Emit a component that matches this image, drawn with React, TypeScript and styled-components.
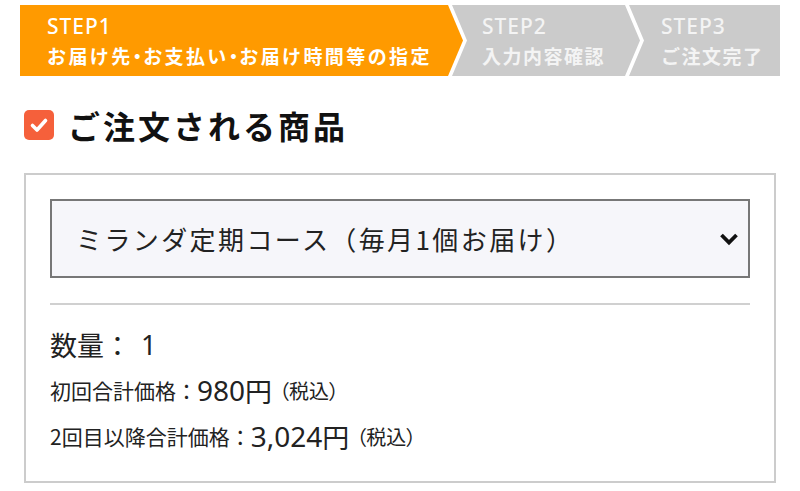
import React from "react";
import styled, { createGlobalStyle } from "styled-components";

const Global = createGlobalStyle`
  html, body { margin: 0; padding: 0; background: #fff; }
  body { font-family: "Noto Sans CJK JP", "Noto Sans", sans-serif; color: #222; }
`;

const Page = styled.div`
  width: 800px;
  padding-top: 5px;
`;

const Stepper = styled.div`
  display: flex;
  margin: 0 20px;
  height: 71px;
`;

type StepProps = { $pos: "first" | "mid" | "last"; $w: number; $active?: boolean };

const clips = {
  first: "polygon(0 0, calc(100% - 15px) 0, 100% 50%, calc(100% - 15px) 100%, 0 100%)",
  mid: "polygon(0 0, calc(100% - 15px) 0, 100% 50%, calc(100% - 15px) 100%, 0 100%, 15px 50%)",
  last: "polygon(0 0, 100% 0, 100% 100%, 0 100%, 15px 50%)",
};

const Step = styled.div<StepProps>`
  flex: 0 0 ${(p) => p.$w}px;
  margin-left: ${(p) => (p.$pos === "first" ? 0 : -11)}px;
  padding-left: ${(p) => (p.$pos === "first" ? 27 : p.$pos === "mid" ? 30 : 32)}px;
  box-sizing: border-box;
  background: ${(p) => (p.$active ? "#ff9a00" : "#cbcbcb")};
  clip-path: ${(p) => clips[p.$pos]};
  color: ${(p) => (p.$active ? "#fff" : "#f4f4f4")};
  display: flex;
  flex-direction: column;
  justify-content: center;
`;

const StepNum = styled.div`
  font-size: 21px;
  line-height: 29px;
  letter-spacing: 1px;
  font-family: "Noto Sans", "Noto Sans CJK JP", sans-serif;
  font-weight: 500;
`;

const StepLabel = styled.div<{ $spacing: number }>`
  font-size: 19px;
  line-height: 29px;
  letter-spacing: ${(p) => p.$spacing}px;
  font-weight: 600;
  white-space: nowrap;
`;

const Dot = styled.span`
  font-feature-settings: "palt";
  letter-spacing: 1px;
`;

const Heading = styled.h2`
  display: flex;
  align-items: center;
  gap: 14px;
  height: 40px;
  margin: 29px 24px 28px;
  font-size: 32px;
  font-weight: 700;
  letter-spacing: 3px;
  color: #111;
`;

const CheckBox = styled.span`
  width: 30px;
  height: 30px;
  border-radius: 5px;
  background: #f5603b;
  display: inline-flex;
  align-items: center;
  justify-content: center;
  flex: none;
`;

const Card = styled.section`
  margin: 0 24px;
  border: 2px solid #cccccc;
  padding: 24px 24px 22px;
`;

const Select = styled.div`
  height: 79px;
  box-sizing: border-box;
  border: 2px solid #777;
  background: #f6f6fa;
  display: flex;
  align-items: center;
  justify-content: space-between;
  padding: 0 9px 0 24px;
  font-size: 26px;
  letter-spacing: 2.4px;
  color: #222;
`;

const Divider = styled.hr`
  border: none;
  height: 2px;
  background: #d0d0d0;
  margin: 25px 0 16px;
`;

const Row = styled.div<{ $size: number }>`
  height: 46px;
  display: flex;
  align-items: center;
  font-size: ${(p) => p.$size}px;
  color: #222;
  white-space: nowrap;
`;

const QtyNum = styled.span`
  margin-left: 10px;
  font-family: "Noto Sans", "Noto Sans CJK JP", sans-serif;
`;

const Price = styled.span`
  font-size: 28px;
  font-family: "Noto Sans", "Noto Sans CJK JP", sans-serif;
`;

const Yen = styled.span`
  font-size: 27px;
`;

const Tax = styled.span`
  font-size: 20px;
  margin-left: 7px;
  font-feature-settings: "palt";
`;

export default function App() {
  return (
    <Page>
      <Global />
      <Stepper>
        <Step $pos="first" $w={443} $active>
          <StepNum>STEP1</StepNum>
          <StepLabel $spacing={2.4}>
            お届け先<Dot>・</Dot>お支払い<Dot>・</Dot>お届け時間等の指定
          </StepLabel>
        </Step>
        <Step $pos="mid" $w={188}>
          <StepNum>STEP2</StepNum>
          <StepLabel $spacing={1.5}>入力内容確認</StepLabel>
        </Step>
        <Step $pos="last" $w={151}>
          <StepNum>STEP3</StepNum>
          <StepLabel $spacing={1.5}>ご注文完了</StepLabel>
        </Step>
      </Stepper>

      <Heading>
        <CheckBox>
          <svg width="20" height="20" viewBox="0 0 20 20">
            <path d="M3.5 10.5 L8 15 L16.5 5.5" fill="none" stroke="#fff" strokeWidth="3.6" strokeLinecap="round" strokeLinejoin="round" />
          </svg>
        </CheckBox>
        ご注文される商品
      </Heading>

      <Card>
        <Select>
          <span>ミランダ定期コース（毎月1個お届け）</span>
          <svg width="20" height="20" viewBox="0 0 20 20">
            <path d="M2.5 6 L10 13.5 L17.5 6" fill="none" stroke="#111" strokeWidth="3.8" />
          </svg>
        </Select>
        <Divider />
        <Row $size={27}>
          数量：<QtyNum>1</QtyNum>
        </Row>
        <Row $size={21}>
          初回合計価格：<Price>980</Price>
          <Yen>円</Yen>
          <Tax>（税込）</Tax>
        </Row>
        <Row $size={21}>
          2回目以降合計価格：<Price>3,024</Price>
          <Yen>円</Yen>
          <Tax>（税込）</Tax>
        </Row>
      </Card>
    </Page>
  );
}
